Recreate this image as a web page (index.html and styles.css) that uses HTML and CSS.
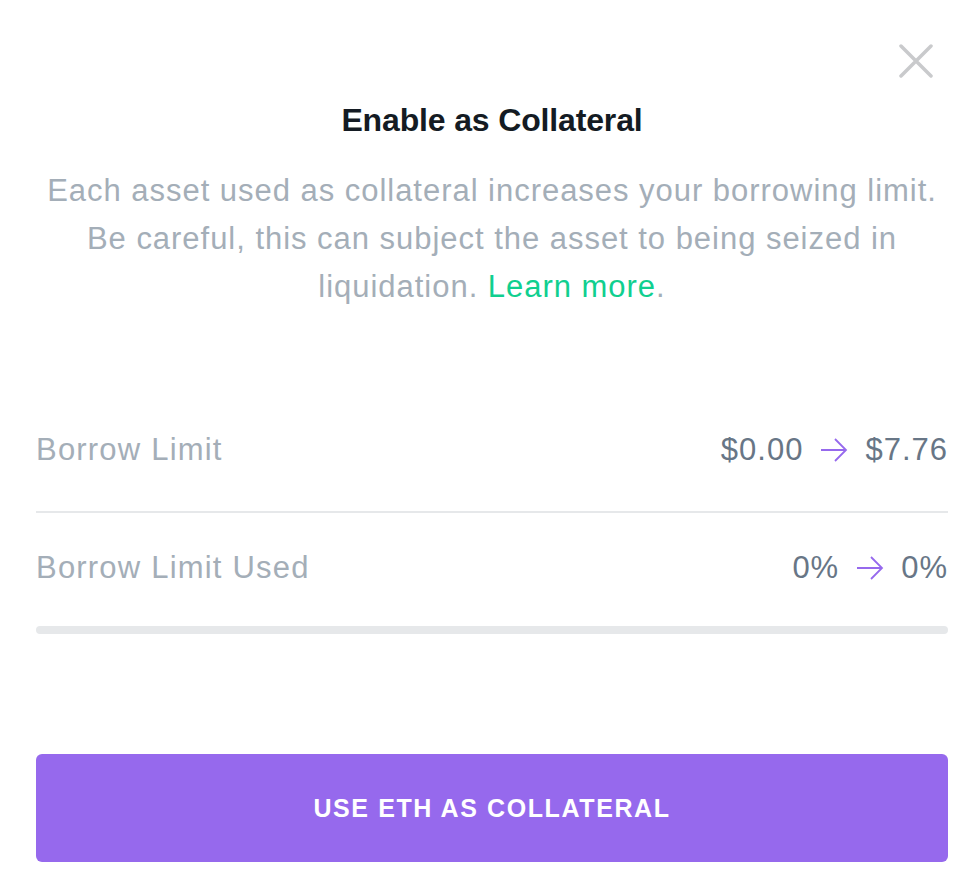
FILE: index.html
```html
<!DOCTYPE html>
<html>
<head>
<meta charset="utf-8">
<link rel="stylesheet" href="styles.css">
</head>
<body>
<div class="modal">
  <div class="close-row">
    <button class="close" aria-label="Close">
      <svg width="34" height="34" viewBox="0 0 34 34"><path d="M2 2 L32 32 M32 2 L2 32" stroke="#c9cacc" stroke-width="3.5" stroke-linecap="round"/></svg>
    </button>
  </div>
  <h1 class="title">Enable as Collateral</h1>
  <p class="desc">Each asset used as collateral increases your borrowing limit.<br>Be careful, this can subject the asset to being seized in<br>liquidation. <a class="learn" href="#">Learn more</a>.</p>
  <div class="stats">
    <div class="row">
      <span class="label">Borrow Limit</span>
      <span class="value">$0.00<svg class="arrow" width="28" height="26" viewBox="0 0 28 26"><path d="M1 13 H26 M15 2 L26 13 L15 24" fill="none" stroke="#9669ed" stroke-width="1.8"/></svg>$7.76</span>
    </div>
    <div class="divider"></div>
    <div class="row">
      <span class="label">Borrow Limit Used</span>
      <span class="value">0%<svg class="arrow" width="28" height="26" viewBox="0 0 28 26"><path d="M1 13 H26 M15 2 L26 13 L15 24" fill="none" stroke="#9669ed" stroke-width="1.8"/></svg>0%</span>
    </div>
    <div class="bar"></div>
  </div>
  <button class="primary">USE ETH AS COLLATERAL</button>
</div>
</body>
</html>
```
FILE: styles.css
```css
html, body { margin: 0; padding: 0; background: #fff; }
body { font-family: "Liberation Sans", Arial, sans-serif; }
.modal { width: 978px; height: 874px; box-sizing: border-box; padding: 44px 30px 0 36px; display: flex; flex-direction: column; }
.close-row { display: flex; justify-content: flex-end; height: 34px; padding-right: 15px; }
.close { background: none; border: 0; padding: 0; width: 34px; height: 34px; cursor: pointer; }
.title { margin: 22px 0 0; text-align: center; font-size: 32px; font-weight: 700; color: #141b23; letter-spacing: -0.15px; line-height: 40px; }
.desc { margin: 27px 0 0; text-align: center; font-size: 31px; line-height: 48px; color: #a4aeb8; letter-spacing: 0.97px; white-space: nowrap; }
.learn { color: #10cf8f; text-decoration: none; }
.stats { margin-top: 108px; }
.row { display: flex; justify-content: space-between; align-items: center; height: 62px; }
.label { font-size: 31px; color: #a4aeb8; letter-spacing: 1.2px; }
.value { font-size: 31px; color: #687686; letter-spacing: 1px; display: flex; align-items: center; }
.arrow { margin: 0 17px; }
.divider { height: 2px; background: #e6e8ea; margin: 30px 0 24px; }
.bar { height: 8px; border-radius: 4px; background: #e6e8ea; margin-top: 27px; }
.primary { margin-top: 120px; height: 108px; border: 0; border-radius: 6px; background: #9669ed; color: #fff; font-family: "Liberation Sans", Arial, sans-serif; font-weight: 700; font-size: 25px; letter-spacing: 1.6px; }
```
